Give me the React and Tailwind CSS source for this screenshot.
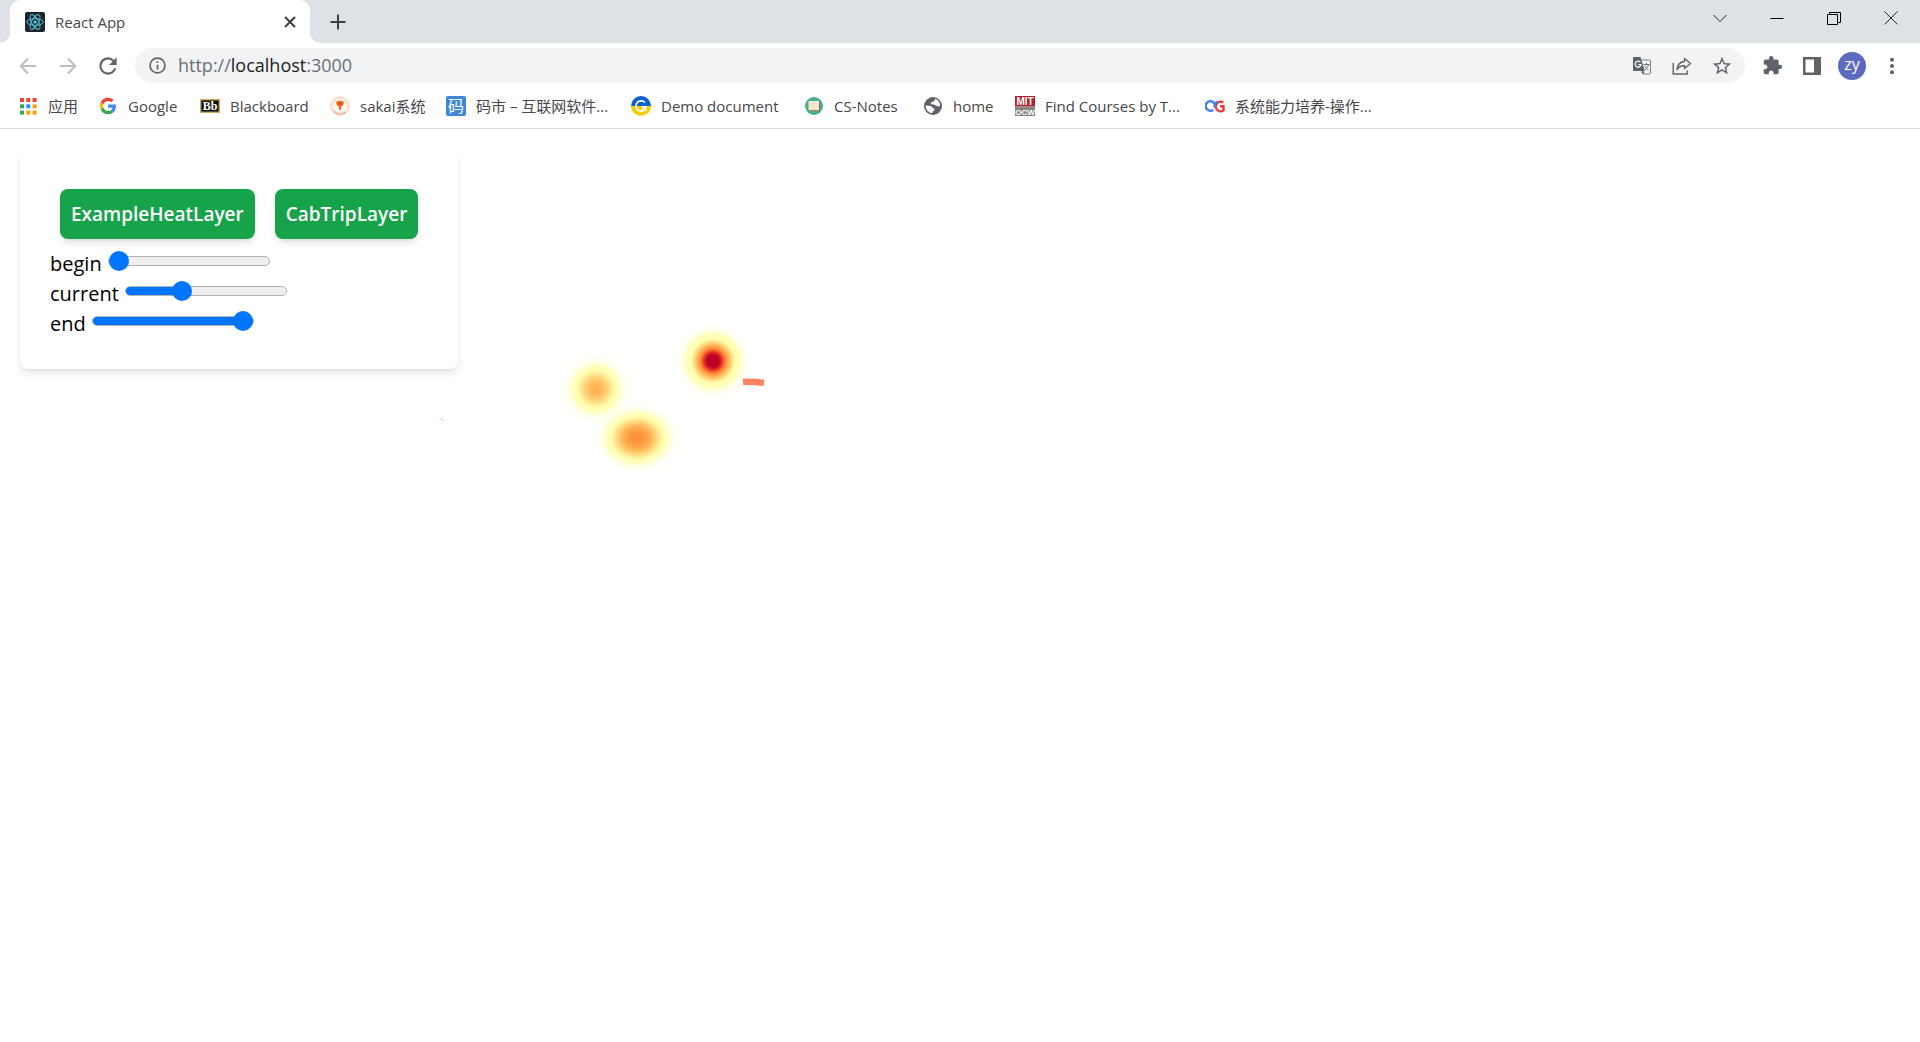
import React, { useState } from "react";

function ReactIcon() {
  return (
    <svg viewBox="0 0 20 20" className="size-5 shrink-0" fill="none" stroke="#4fc3dc">
      <rect width="20" height="20" rx="2" fill="#20232a" stroke="none" />
      <circle cx="10" cy="10" r="1.6" fill="#61dafb" stroke="none" />
      <ellipse cx="10" cy="10" rx="8.3" ry="3.3" />
      <ellipse cx="10" cy="10" rx="8.3" ry="3.3" transform="rotate(60 10 10)" />
      <ellipse cx="10" cy="10" rx="8.3" ry="3.3" transform="rotate(120 10 10)" />
    </svg>
  );
}

function AppsIcon() {
  const colors = ["#f44336", "#f44336", "#f44336", "#34a853", "#2196f3", "#ffa000", "#34a853", "#ffa000", "#ffa000"];
  return (
    <svg viewBox="0 0 20 20" className="size-5 shrink-0">
      {colors.map((c, i) => (
        <rect key={i} x={2 + (i % 3) * 6.3} y={2 + Math.floor(i / 3) * 6.3} width="4" height="4" fill={c} />
      ))}
    </svg>
  );
}

function GoogleIcon() {
  return (
    <svg viewBox="-5 -5 58 58" className="size-5 shrink-0">
      <path fill="#EA4335" d="M24 9.5c3.54 0 6.71 1.22 9.21 3.6l6.85-6.85C35.9 2.38 30.47 0 24 0 14.62 0 6.51 5.38 2.56 13.22l7.98 6.19C12.43 13.72 17.74 9.5 24 9.5z" />
      <path fill="#4285F4" d="M46.98 24.55c0-1.57-.15-3.09-.38-4.55H24v9.02h12.94c-.58 2.96-2.26 5.48-4.78 7.18l7.73 6c4.51-4.18 7.09-10.36 7.09-17.65z" />
      <path fill="#FBBC05" d="M10.53 28.59c-.48-1.45-.76-2.99-.76-4.59s.27-3.14.76-4.59l-7.98-6.19C.92 16.46 0 20.12 0 24c0 3.88.92 7.54 2.56 10.78l7.97-6.19z" />
      <path fill="#34A853" d="M24 48c6.48 0 11.93-2.13 15.89-5.81l-7.73-6c-2.15 1.45-4.92 2.3-8.16 2.3-6.26 0-11.57-4.22-13.47-9.91l-7.98 6.19C6.51 42.62 14.62 48 24 48z" />
    </svg>
  );
}

function BlackboardIcon() {
  return (
    <svg viewBox="0 0 20 20" className="size-5 shrink-0 overflow-visible">
      <rect x="0.7" y="3.7" width="18.6" height="12.6" fill="#111" stroke="#c9a85a" strokeWidth="1.4" />
      <text x="10" y="14" textAnchor="middle" fill="#fff" fontSize="12" fontWeight="700" fontFamily="Liberation Serif, serif">Bb</text>
    </svg>
  );
}

function SakaiIcon() {
  return (
    <svg viewBox="0 0 20 20" className="size-5 shrink-0">
      <circle cx="10" cy="10" r="9.4" fill="#fff7f1" stroke="#fbd3b8" strokeWidth="0.9" />
      <circle cx="10" cy="10" r="7.9" fill="none" stroke="#f9c9a8" strokeWidth="1.5" strokeDasharray="1 1" />
      <path d="M4.5 15.7a8 8 0 0 0 11 0" fill="none" stroke="#f09a60" strokeWidth="1.6" strokeDasharray="1.4 1" />
      <path d="M6.2 7.2C6 5 8 4.7 10 4.7s4 .3 3.8 2.5c-.1 1.6-1.4 2.6-2.4 3l-.4 3.6H9.1l-.4-3.6c-1.200-.4-2.400-1.400-2.500-3z" fill="#f06c1c" />
      <path d="M8 7.800h4" stroke="#d8480a" strokeWidth="1.200" />
    </svg>
  );
}

function MaIcon() {
  return (
    <span className="flex size-5 shrink-0 items-center justify-center rounded-xs bg-[#3f87dc] text-[16px] leading-none text-white">码</span>
  );
}

function DemoIcon() {
  return (
    <svg viewBox="0 0 20 20" className="size-5 shrink-0">
      <path d="M0 10a10 10 0 0 1 20 0z" fill="#0a62d0" />
      <path d="M0 10a10 10 0 0 0 20 0z" fill="#fccd06" />
      <path d="M14 6.500A5.200 5.200 0 1 0 10 15.200a5.200 5.200 0 0 0 3.800-1.800" fill="none" stroke="#fff" strokeWidth="1.700" />
      <path d="M10.500 10.700h4.300v4M14.800 10.700l-3.300 3" fill="none" stroke="#fff" strokeWidth="1.500" />
    </svg>
  );
}

function NotesIcon() {
  return (
    <svg viewBox="0 0 20 20" className="size-5 shrink-0">
      <circle cx="10" cy="10" r="9" fill="#45b097" />
      <rect x="4.500" y="5" width="11.500" height="10" rx="1" fill="#a35a45" />
      <rect x="4.500" y="5" width="10.500" height="9.200" fill="#f7ebd2" />
      <path d="M9.800 5v9" stroke="#e8d9b9" strokeWidth="0.800" />
    </svg>
  );
}

function GlobeIcon() {
  return (
    <svg viewBox="0 0 20 20" className="size-5 shrink-0">
      <circle cx="10" cy="10" r="9" fill="#5f6368" />
      <path d="M11.500 2.700c.9 1.200.2 2.300-1 2.900-1.300.5-2.800.7-2.600 2 .2 1 1.700.8 2.800.8 1.300 0 1.700.8 2.500 1.400.9.600 2.200.500 3.800.4a7.300 7.300 0 0 0-5.500-7.500z" fill="#fff" />
      <path d="M2.700 9.500c2 .2 3.700.1 5 .4 1.500.4 1.400 1.900 2.700 2.300 1.100.4 1.500 1.100.9 2-.6.800-1.400.700-1.600 1.600-.1.700-.3 1.300-.9 1.500a7.400 7.400 0 0 1-6.100-7.800z" fill="#fff" />
    </svg>
  );
}

function MitIcon() {
  return (
    <svg viewBox="0 0 20 20" className="size-5 shrink-0 overflow-visible">
      <rect width="20" height="10.500" fill="#b3202a" />
      <rect y="10.500" width="20" height="9.500" fill="#8b8580" />
      <text x="10" y="9" textAnchor="middle" fill="#fff" fontSize="10" fontWeight="700" fontFamily="Liberation Sans, sans-serif">MIT</text>
      <text x="10" y="18.500" textAnchor="middle" fill="#fff" fontSize="8" fontWeight="700" fontFamily="Liberation Sans, sans-serif">OCW</text>
    </svg>
  );
}

function CgIcon() {
  return (
    <svg viewBox="0 0 20 20" className="size-5 shrink-0" fill="none" strokeWidth="2.400">
      <path d="M8.300 13.700A4.700 4.700 0 1 1 8.300 6.300Q9.800 7.600 10.400 10" stroke="#3e82f7" />
      <path d="M18.300 6.500A4.800 4.800 0 1 0 18.500 14.300V10.200H15" stroke="#ea3b3b" />
      <path d="M9.800 11.500A4.800 4.800 0 0 1 12.500 5.600" stroke="#3e82f7" />
    </svg>
  );
}

const bookmarks = [
  { label: "应用", Icon: AppsIcon, width: "w-20" },
  { label: "Google", Icon: GoogleIcon, width: "w-[102px]" },
  { label: "Blackboard", Icon: BlackboardIcon, width: "w-[130px]" },
  { label: "sakai系统", Icon: SakaiIcon, width: "w-[116px]" },
  { label: "码市 – 互联网软件...", Icon: MaIcon, width: "w-[185px]" },
  { label: "Demo document", Icon: DemoIcon, width: "w-[173px]" },
  { label: "CS-Notes", Icon: NotesIcon, width: "w-[119px]" },
  { label: "home", Icon: GlobeIcon, width: "w-[92px]" },
  { label: "Find Courses by T...", Icon: MitIcon, width: "w-[190px]" },
  { label: "系统能力培养-操作...", Icon: CgIcon, width: "w-[190px]" },
];

function TabStrip() {
  return (
    <header className="flex h-[43px] items-stretch bg-[#dee1e6]">
      <div className="flex w-[10px] items-end bg-white">
        <div className="h-full w-full rounded-br-[10px] bg-[#dee1e6]" />
      </div>
      <div className="bg-[#dee1e6]">
        <div className="flex h-full w-[300px] items-center gap-2.5 rounded-t-[10px] bg-white pr-3 pl-[15px]">
          <ReactIcon />
          <span className="grow pt-0.5 text-[15px] text-[#45474a]">React App</span>
          <button aria-label="Close tab" className="flex size-4 items-center justify-center">
            <svg viewBox="0 0 12 12" className="size-3" stroke="#3c4043" strokeWidth="2"><path d="M1 1l10 10M11 1L1 11" /></svg>
          </button>
        </div>
      </div>
      <div className="w-[10px] bg-white">
        <div className="h-full w-full rounded-bl-[10px] bg-[#dee1e6]" />
      </div>
      <button aria-label="New tab" className="flex w-[35px] items-center justify-center">
        <svg viewBox="0 0 16 16" className="size-4" stroke="#3c4043" strokeWidth="2"><path d="M8 0.500v15M0.500 8h15" /></svg>
      </button>
      <div className="grow" />
      <div className="flex h-9 items-center pr-px">
        <button aria-label="Search tabs" className="flex w-[57px] justify-center">
          <svg viewBox="0 0 14 14" className="size-3.5" fill="none" stroke="#222"><path d="M0.500 4l6.500 6.500L13.500 4" /></svg>
        </button>
        <button aria-label="Minimize" className="flex w-[57px] justify-center">
          <svg viewBox="0 0 14 14" className="size-3.5" fill="none" stroke="#000"><path d="M0.500 7.500h13" /></svg>
        </button>
        <button aria-label="Restore" className="flex w-[57px] justify-center">
          <svg viewBox="0 0 14 14" className="size-3.5" fill="none" stroke="#000"><path d="M0.500 3.500h10v10h-10zM2.500 3.500v-2h11v10h-3" /></svg>
        </button>
        <button aria-label="Close" className="flex w-[57px] justify-center">
          <svg viewBox="0 0 14 14" className="size-3.5" fill="none" stroke="#222"><path d="M0.500 0.500l13 13M13.500 0.500l-13 13" /></svg>
        </button>
      </div>
    </header>
  );
}

function Toolbar() {
  return (
    <nav className="flex h-[45px] items-center px-2">
      <button aria-label="Back" className="flex w-10 justify-center">
        <svg viewBox="0 0 18 18" className="size-[18px]" fill="none" stroke="#bcbec1" strokeWidth="2"><path d="M17 9H2M9 1.500L1.700 9 9 16.500" /></svg>
      </button>
      <button aria-label="Forward" className="flex w-10 justify-center">
        <svg viewBox="0 0 18 18" className="size-[18px]" fill="none" stroke="#bcbec1" strokeWidth="2"><path d="M1 9h15M9 1.500L16.300 9 9 16.500" /></svg>
      </button>
      <button aria-label="Reload" className="flex w-10 justify-center">
        <svg viewBox="0 0 24 24" className="size-[26px]" fill="#5f6368"><path d="M17.650 6.350A7.960 7.960 0 0 0 12 4a8 8 0 1 0 7.730 10h-2.080A6 6 0 1 1 12 6c1.660 0 3.140.690 4.220 1.780L13 11h7V4l-2.350 2.350z" /></svg>
      </button>
      <div className="ml-[7px] flex h-[35px] min-w-0 grow items-center rounded-full bg-[#f1f3f4] pr-[3px]">
        <button aria-label="Site information" className="ml-3.5 flex">
          <svg viewBox="0 0 16 16" className="size-[17px]" fill="none" stroke="#5f6368" strokeWidth="1.600"><circle cx="8" cy="8" r="7" /><path d="M8 7.200v4.500M8 4v1.700" /></svg>
        </button>
        <button aria-label="Address" className="ml-3 grow text-left text-[18px] text-[#6b6f74]">
          http://<span className="text-[#202124]">localhost</span>:3000
        </button>
        <button aria-label="Translate" className="flex w-10 justify-center">
          <svg viewBox="0 0 20 20" className="size-5">
            <path d="M8 4h9.500c.6 0 1 .4 1 1v12c0 .6-.4 1-1 1H11.500L8 4z" fill="#f1f3f4" stroke="#7b7f83" />
            <path d="M2 1h6.500l4.300 14H2c-.6 0-1-.4-1-1V2c0-.6.4-1 1-1zM9 15.500h3.500L11 18.500z" fill="#5f6368" />
            <path d="M8.300 6.200A2.900 2.900 0 1 0 9 8.500H6.300" fill="none" stroke="#fff" strokeWidth="1.200" />
            <path d="M11.500 8.500h6M14.500 7v1.500M16.500 8.500c-.4 2.400-2 4.300-3.600 5.500M12.700 10c.7 1.700 2.300 3.400 3.800 4.300" fill="none" stroke="#6b6f74" />
          </svg>
        </button>
        <button aria-label="Share" className="flex w-10 justify-center">
          <svg viewBox="0 0 20 20" className="size-5" fill="none" stroke="#5f6368" strokeWidth="1.400"><path d="M1.200 7v11h14v-3.500" /><path d="M12.500 2.500l6 5-6 5V9.700c-3.500-.2-6 1.300-7.500 4C5.300 9.500 7.500 6 12.500 5.500z" strokeLinejoin="round" /></svg>
        </button>
        <button aria-label="Bookmark this page" className="flex w-10 justify-center">
          <svg viewBox="0 0 24 24" className="size-[22px]" fill="#5f6368"><path d="M22 9.240l-7.190-.620L12 2 9.190 8.630 2 9.240l5.460 4.730L5.820 21 12 17.270 18.180 21l-1.630-7.030L22 9.240zM12 15.400l-3.760 2.270 1-4.280-3.320-2.880 4.380-.380L12 6.100l1.710 4.040 4.380.380-3.320 2.880 1 4.280L12 15.400z" /></svg>
        </button>
      </div>
      <button aria-label="Extensions" className="ml-[7px] flex w-10 justify-center">
        <svg viewBox="0 0 24 24" className="size-[21px]" fill="#5f6368"><path d="M20.500 11H19V7c0-1.100-.9-2-2-2h-4V3.500a2.500 2.500 0 0 0-5 0V5H4c-1.100 0-1.990.9-1.990 2v3.800H3.500c1.490 0 2.700 1.210 2.700 2.700s-1.210 2.700-2.700 2.700H2V20c0 1.100.9 2 2 2h3.800v-1.500c0-1.490 1.210-2.700 2.700-2.700s2.700 1.210 2.700 2.700V22H17c1.100 0 2-.9 2-2v-4h1.500a2.500 2.500 0 0 0 0-5z" /></svg>
      </button>
      <button aria-label="Side panel" className="flex w-10 justify-center">
        <svg viewBox="0 0 18 18" className="size-[18px]"><path fillRule="evenodd" d="M0 0h18v18H0zM2.500 2.500v13H11v-13z" fill="#5f6368" /></svg>
      </button>
      <button aria-label="Profile" className="mx-1.5 flex size-7 items-center justify-center rounded-full bg-[#5c6bc0] pb-1 text-[16px] leading-none text-white">zy</button>
      <button aria-label="Menu" className="flex w-10 justify-center">
        <svg viewBox="0 0 18 18" className="size-[18px]" fill="#5f6368"><circle cx="9" cy="2.700" r="2" /><circle cx="9" cy="9" r="2" /><circle cx="9" cy="15.300" r="2" /></svg>
      </button>
    </nav>
  );
}

function BookmarkBar() {
  return (
    <nav aria-label="Bookmarks" className="flex h-[41px] items-start border-b border-[#dadce0] pt-2 pl-[18px]">
      {bookmarks.map(({ label, Icon, width }) => (
        <a key={label} href="#" className={`flex shrink-0 items-center gap-2.5 whitespace-nowrap ${width}`}>
          <Icon />
          <span className="text-[15px] leading-5 text-[#45474a]">{label}</span>
        </a>
      ))}
    </nav>
  );
}

const thumb =
  "[&::-webkit-slider-thumb]:size-5 [&::-webkit-slider-thumb]:-mt-[6px] [&::-webkit-slider-thumb]:appearance-none [&::-webkit-slider-thumb]:rounded-full [&::-webkit-slider-thumb]:bg-[#0075ff]";
const track =
  "[&::-webkit-slider-runnable-track]:h-2.5 [&::-webkit-slider-runnable-track]:rounded-full [&::-webkit-slider-runnable-track]:border [&::-webkit-slider-runnable-track]:border-[#b2b2b2] [&::-webkit-slider-runnable-track]:bg-[#efefef] [&::-webkit-slider-runnable-track]:bg-[image:linear-gradient(#0075ff,#0075ff)] [&::-webkit-slider-runnable-track]:bg-[length:var(--fill)_100%] [&::-webkit-slider-runnable-track]:bg-no-repeat";

function Slider({ label, initial }) {
  const [value, setValue] = useState(initial);
  return (
    <div className="flex h-[30px] items-start gap-1.5">
      <label htmlFor={label} className="leading-[30px]">{label}</label>
      <input
        id={label}
        type="range"
        min="0"
        max="100"
        value={value}
        onChange={(e) => setValue(Number(e.target.value))}
        style={{ "--fill": `${value}%` }}
        className={`h-6 w-[162px] appearance-none bg-transparent ${track} ${thumb}`}
      />
    </div>
  );
}

const shadow = "shadow-[0_5px_8px_-1px_rgba(0,0,0,0.1),0_3px_5px_-3px_rgba(0,0,0,0.1)]";

function LayerButton({ children }) {
  return (
    <button className={`m-2.5 h-[50px] rounded-lg bg-[#16a34a] px-[11px] text-[19px] font-semibold text-white ${shadow}`}>{children}</button>
  );
}

function HeatMap() {
  return (
    <svg className="pointer-events-none absolute inset-0 h-full w-full" aria-label="Heat map">
      <defs>
        <radialGradient id="low">
          <stop offset="0" stopColor="#feaf50" />
          <stop offset="0.150" stopColor="#feb95a" />
          <stop offset="0.300" stopColor="#fed076" />
          <stop offset="0.420" stopColor="#feea96" />
          <stop offset="0.520" stopColor="#ffffb2" />
          <stop offset="0.600" stopColor="#ffffb2" stopOpacity="0.950" />
          <stop offset="0.700" stopColor="#ffffb2" stopOpacity="0.400" />
          <stop offset="0.820" stopColor="#ffffb2" stopOpacity="0.130" />
          <stop offset="1" stopColor="#ffffb2" stopOpacity="0" />
        </radialGradient>
        <radialGradient id="mid">
          <stop offset="0" stopColor="#fd8a3c" />
          <stop offset="0.160" stopColor="#fd9741" />
          <stop offset="0.320" stopColor="#feb353" />
          <stop offset="0.440" stopColor="#fed47c" />
          <stop offset="0.560" stopColor="#fff5a5" />
          <stop offset="0.620" stopColor="#ffffb2" />
          <stop offset="0.680" stopColor="#ffffb2" stopOpacity="0.900" />
          <stop offset="0.760" stopColor="#ffffb2" stopOpacity="0.400" />
          <stop offset="0.880" stopColor="#ffffb2" stopOpacity="0.120" />
          <stop offset="1" stopColor="#ffffb2" stopOpacity="0" />
        </radialGradient>
        <radialGradient id="high">
          <stop offset="0" stopColor="#bd0026" />
          <stop offset="0.150" stopColor="#bd0026" />
          <stop offset="0.230" stopColor="#e93420" />
          <stop offset="0.300" stopColor="#fd8038" />
          <stop offset="0.380" stopColor="#feb050" />
          <stop offset="0.480" stopColor="#fedd85" />
          <stop offset="0.550" stopColor="#ffffb2" />
          <stop offset="0.660" stopColor="#ffffb2" stopOpacity="0.950" />
          <stop offset="0.740" stopColor="#ffffb2" stopOpacity="0.400" />
          <stop offset="0.840" stopColor="#ffffb2" stopOpacity="0.100" />
          <stop offset="1" stopColor="#ffffb2" stopOpacity="0" />
        </radialGradient>
      </defs>
      <circle cx="596" cy="260" r="37" fill="url(#low)" />
      <ellipse cx="637" cy="309" rx="44" ry="36" fill="url(#mid)" />
      <circle cx="713" cy="232" r="40" fill="url(#high)" />
      <path d="M743 253Q753 252 764 254" fill="none" stroke="#ff8463" strokeWidth="6.500" />
      <path d="M441 289h1v2h-1z" fill="#f5b5a8" />
      <path d="M443 290h1v2h-1z" fill="#fbdcd5" />
    </svg>
  );
}

export default function App() {
  return (
    <div className="flex min-h-screen flex-col bg-white font-['Open_Sans','Noto_Sans_CJK_SC',sans-serif]">
      <TabStrip />
      <Toolbar />
      <BookmarkBar />
      <main className="relative grow overflow-hidden">
        <HeatMap />
        <section className={`relative m-5 w-fit rounded-lg bg-white p-[30px] text-[20px] text-black ${shadow}`}>
          <div className="flex">
            <LayerButton>ExampleHeatLayer</LayerButton>
            <LayerButton>CabTripLayer</LayerButton>
          </div>
          <Slider label="begin" initial={0} />
          <Slider label="current" initial={33} />
          <Slider label="end" initial={100} />
        </section>
      </main>
    </div>
  );
}
